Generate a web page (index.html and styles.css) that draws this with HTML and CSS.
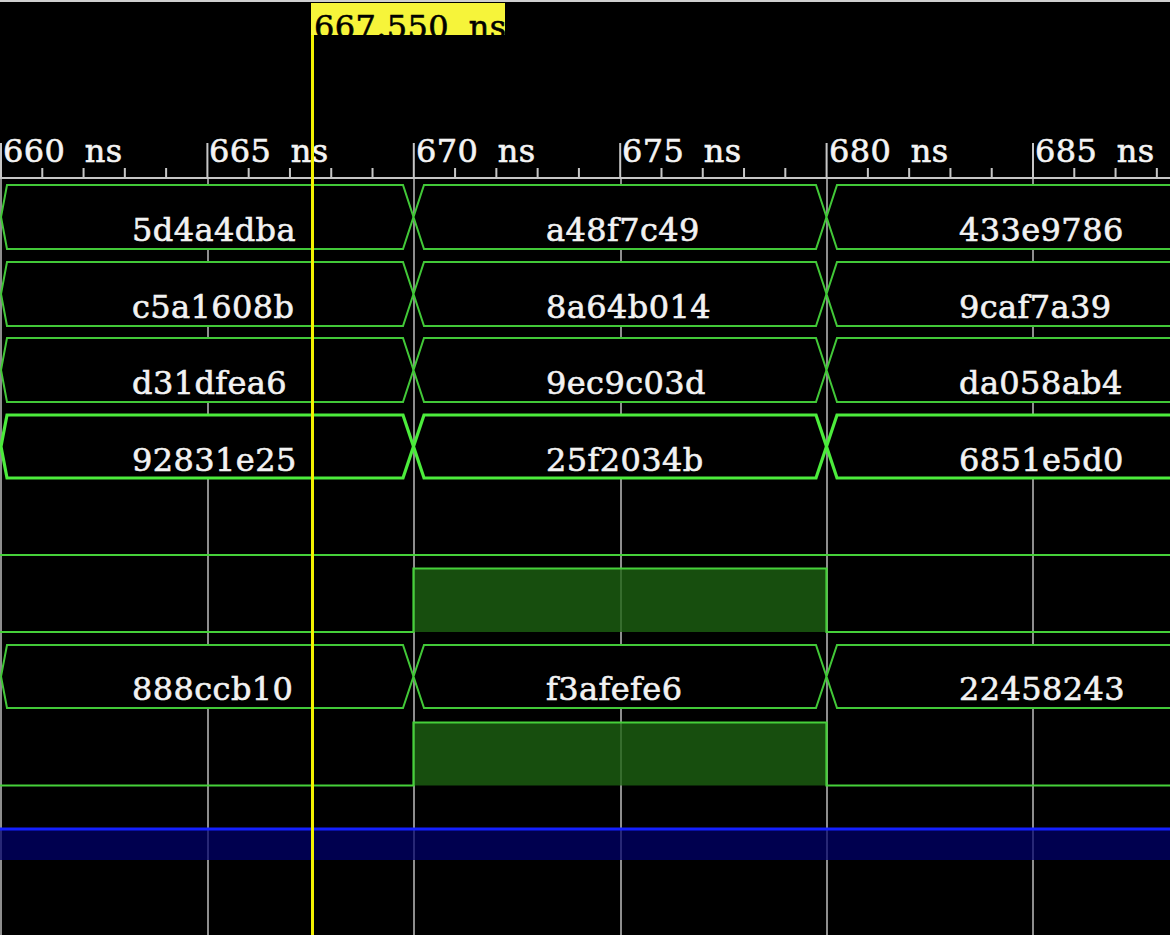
FILE: index.html
```html
<!DOCTYPE html>
<html>
<head>
<meta charset="utf-8">
<title>Waveform</title>
<link rel="stylesheet" href="styles.css">
</head>
<body>
<div class="wave">
  <div class="cursor-bar">
    <div class="cursor-flag" style="left:311px">667.550 ns</div>
  </div>

  <div class="axis">
    <svg class="axis-svg" width="1170" height="144" viewBox="0 0 1170 144">
      <line class="axis-line" x1="0" y1="143" x2="1170" y2="143"/>
      <path class="tick" d="M1,108V143 M207.4,108V143 M413.8,108V143 M620.2,108V143 M826.6,108V143 M1033,108V143
        M42.28,133V143 M83.56,133V143 M124.84,133V143 M166.12,133V143
        M248.68,133V143 M289.96,133V143 M331.24,133V143 M372.52,133V143
        M455.08,133V143 M496.36,133V143 M537.64,133V143 M578.92,133V143
        M661.48,133V143 M702.76,133V143 M744.04,133V143 M785.32,133V143
        M867.88,133V143 M909.16,133V143 M950.44,133V143 M991.72,133V143
        M1074.28,133V143 M1115.56,133V143 M1156.84,133V143"/>
    </svg>
    <span class="tlabel" style="left:3px">660 ns</span>
    <span class="tlabel" style="left:209px">665 ns</span>
    <span class="tlabel" style="left:416px">670 ns</span>
    <span class="tlabel" style="left:622px">675 ns</span>
    <span class="tlabel" style="left:829px">680 ns</span>
    <span class="tlabel" style="left:1035px">685 ns</span>
  </div>

  <div class="grid">
    <i class="gline" style="left:0px"></i>
    <i class="gline" style="left:206.5px"></i>
    <i class="gline" style="left:413px"></i>
    <i class="gline" style="left:619.5px"></i>
    <i class="gline" style="left:826px"></i>
    <i class="gline" style="left:1032px"></i>
  </div>

  <div class="rows">
    <div class="row">
      <svg class="sig" width="1170" height="77" viewBox="0 0 1170 77">
        <path class="bus" d="M7,5H403L413.5,37L403,69H7L1,37Z"/>
        <path class="bus" d="M424,5H816L826.5,37L816,69H424L413.5,37Z"/>
        <path class="bus" d="M837,5H1180V69H837L826.5,37Z"/>
      </svg>
      <span class="val" style="left:132px">5d4a4dba</span>
      <span class="val" style="left:546px">a48f7c49</span>
      <span class="val" style="left:959px">433e9786</span>
    </div>
    <div class="row">
      <svg class="sig" width="1170" height="77" viewBox="0 0 1170 77">
        <path class="bus" d="M7,5H403L413.5,37L403,69H7L1,37Z"/>
        <path class="bus" d="M424,5H816L826.5,37L816,69H424L413.5,37Z"/>
        <path class="bus" d="M837,5H1180V69H837L826.5,37Z"/>
      </svg>
      <span class="val" style="left:132px">c5a1608b</span>
      <span class="val" style="left:546px">8a64b014</span>
      <span class="val" style="left:959px">9caf7a39</span>
    </div>
    <div class="row">
      <svg class="sig" width="1170" height="77" viewBox="0 0 1170 77">
        <path class="bus" d="M7,5H403L413.5,37L403,69H7L1,37Z"/>
        <path class="bus" d="M424,5H816L826.5,37L816,69H424L413.5,37Z"/>
        <path class="bus" d="M837,5H1180V69H837L826.5,37Z"/>
      </svg>
      <span class="val" style="left:132px">d31dfea6</span>
      <span class="val" style="left:546px">9ec9c03d</span>
      <span class="val" style="left:959px">da058ab4</span>
    </div>
    <div class="row">
      <svg class="sig" width="1170" height="77" viewBox="0 0 1170 77">
        <path class="bus bus-sel" d="M7,5H403L413.5,36.5L403,68H7L1,36.5Z"/>
        <path class="bus bus-sel" d="M424,5H816L826.5,36.5L816,68H424L413.5,36.5Z"/>
        <path class="bus bus-sel" d="M837,5H1180V68H837L826.5,36.5Z"/>
      </svg>
      <span class="val" style="left:132px">92831e25</span>
      <span class="val" style="left:546px">25f2034b</span>
      <span class="val" style="left:959px">6851e5d0</span>
    </div>
    <div class="row">
      <svg class="sig" width="1170" height="77" viewBox="0 0 1170 77">
        <path class="bit" d="M-5,69H1180"/>
      </svg>
    </div>
    <div class="row">
      <svg class="sig" width="1170" height="77" viewBox="0 0 1170 77">
        <rect class="bit-fill" x="413.5" y="5.5" width="413" height="63.5"/>
        <path class="bit" d="M-5,69H413.5V5.5H826.5V69H1180"/>
      </svg>
    </div>
    <div class="row">
      <svg class="sig" width="1170" height="77" viewBox="0 0 1170 77">
        <path class="bus" d="M7,6H403L413.5,37.5L403,69H7L1,37.5Z"/>
        <path class="bus" d="M424,6H816L826.5,37.5L816,69H424L413.5,37.5Z"/>
        <path class="bus" d="M837,6H1180V69H837L826.5,37.5Z"/>
      </svg>
      <span class="val" style="left:132px">888ccb10</span>
      <span class="val" style="left:546px">f3afefe6</span>
      <span class="val" style="left:959px">22458243</span>
    </div>
    <div class="row">
      <svg class="sig" width="1170" height="77" viewBox="0 0 1170 77">
        <rect class="bit-fill" x="413.5" y="6.5" width="413" height="63"/>
        <path class="bit" d="M-5,69.5H413.5V6.5H826.5V69.5H1180"/>
      </svg>
    </div>
    <div class="row">
      <svg class="sig" width="1170" height="77" viewBox="0 0 1170 77">
        <rect class="z-fill" x="-5" y="36" width="1180" height="32"/>
        <path class="z-line" d="M-5,37H1180"/>
      </svg>
    </div>
  </div>

  <div class="cursor-line" style="left:310.5px"></div>
</div>
</body>
</html>
```

FILE: styles.css
```css
html, body {
  margin: 0;
  padding: 0;
  background: #000;
}

.wave {
  position: relative;
  width: 1170px;
  height: 935px;
  overflow: hidden;
  background: #000;
  font-family: "DejaVu Serif", "Liberation Serif", serif;
  font-weight: normal;
  font-size: 32px;
  letter-spacing: 0.4px;
  word-spacing: 9px;
  color: #f2f2f2;
  -webkit-text-stroke: 0.6px currentColor;
}

.cursor-bar {
  position: relative;
  height: 33px;
  border-top: 2px solid #cfcfcf;
}

.cursor-flag {
  position: absolute;
  top: 1px;
  width: 194px;
  height: 32px;
  overflow: hidden;
  background: #f6f43a;
  color: #000;
  padding-left: 3px;
  box-sizing: border-box;
  line-height: 49px;
  white-space: nowrap;
  z-index: 5;
}

.axis {
  position: relative;
  height: 144px;
}

.axis-svg {
  display: block;
  position: absolute;
  left: 0;
  top: 0;
}

.axis-line {
  stroke: #c6c6c6;
  stroke-width: 2;
}

.tick {
  stroke: #c6c6c6;
  stroke-width: 2;
  fill: none;
}

.tlabel {
  position: absolute;
  top: 97px;
  line-height: 38px;
  white-space: nowrap;
  color: #f4f4f4;
}

.grid {
  position: absolute;
  left: 0;
  top: 179px;
  right: 0;
  bottom: 0;
  z-index: 0;
}

.gline {
  position: absolute;
  top: 0;
  bottom: 0;
  width: 2px;
  background: #8e8e8e;
}

.rows {
  position: relative;
  z-index: 1;
  display: flex;
  flex-direction: column;
  padding-top: 1px;
}

.row {
  position: relative;
  height: 76.5px;
  flex: none;
}

.sig {
  display: block;
  position: absolute;
  left: 0;
  top: 0;
  overflow: visible;
}

.bus {
  fill: #000;
  stroke: #42c838;
  stroke-width: 2;
  stroke-linejoin: miter;
}

.bus-sel {
  stroke: #4cec3c;
  stroke-width: 3.2;
}

.bit {
  fill: none;
  stroke: #46d03a;
  stroke-width: 2.2;
}

.bit-fill {
  fill: rgba(30, 100, 18, 0.78);
}

.z-fill {
  fill: rgba(0, 0, 110, 0.72);
}

.z-line {
  stroke: #1420ff;
  stroke-width: 3;
  fill: none;
}

.val {
  position: absolute;
  top: 31px;
  line-height: 38px;
  white-space: nowrap;
  color: #f2f2f2;
}

.cursor-line {
  position: absolute;
  top: 3px;
  bottom: 0;
  width: 3px;
  background: #f2f000;
  z-index: 4;
}
```
